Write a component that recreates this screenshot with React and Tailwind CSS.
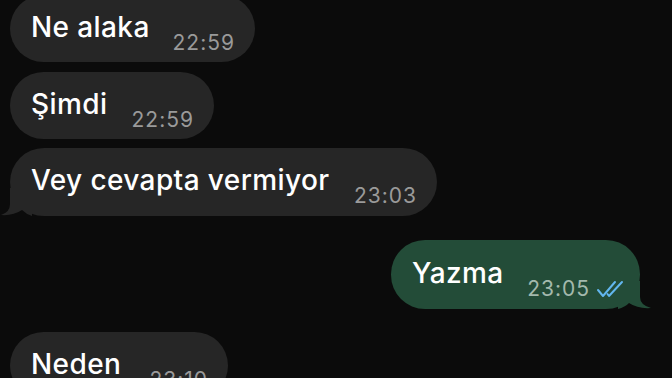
import React from 'react'

const font = { fontFamily: 'Inter, "Noto Sans", "Liberation Sans", sans-serif' }

function LeftTail() {
  return (
    <svg className="absolute left-[-10px] bottom-0" width="32" height="28" viewBox="0 0 32 28">
      <path d="M10 0 L10 16 Q10 24 1 27 Q13 28 22 22 Q26 26 32 28 L32 0 Z" fill="#262626" />
    </svg>
  )
}

function RightTail() {
  return (
    <svg className="absolute right-[-12px] bottom-0" width="34" height="28" viewBox="0 0 34 28">
      <path d="M22 0 L22 16 Q22 24 33 27 Q20 28 11 22 Q7 26 0 28 L0 0 Z" fill="#234c38" />
    </svg>
  )
}

function Ticks() {
  return (
    <svg width="30" height="20" viewBox="0 0 30 20" className="ml-[6px]">
      <path d="M2 11 L7 17 L19 3" fill="none" stroke="#62b6ee" strokeWidth="2" strokeLinecap="round" strokeLinejoin="round" />
      <path d="M11.5 15 L13 17 L26 3" fill="none" stroke="#62b6ee" strokeWidth="2" strokeLinecap="round" strokeLinejoin="round" />
    </svg>
  )
}

function Bubble({ text, time, width, mine, tail, className = '' }) {
  return (
    <div
      className={`relative flex h-[67px] shrink-0 items-start justify-between rounded-[34px] pl-[21px] pt-[18px] ${mine ? 'bg-[#234c38] pr-[14px]' : 'bg-[#262626] pr-[20px]'} ${className}`}
      style={{ width }}
    >
      {tail && (mine ? <RightTail /> : <LeftTail />)}
      <span className="relative whitespace-nowrap text-[28px] font-medium leading-none tracking-[0.4px] text-white">{text}</span>
      <span className="relative mt-[19px] flex items-end">
        <span className={`whitespace-nowrap text-[21px] leading-none tracking-[1px] ${mine ? 'text-[#a3b9ad]' : 'text-[#9a9a9a]'}`}>{time}</span>
        {mine && <Ticks />}
      </span>
    </div>
  )
}

export default function App() {
  return (
    <div className="h-[378px] w-[672px] overflow-hidden bg-[#0b0b0b]" style={font}>
      <div className="flex flex-col items-start pl-[10px] pr-[32px]">
        <Bubble text="Ne alaka" time="22:59" width={245} className="mt-[-5px]" />
        <Bubble text="Şimdi" time="22:59" width={204} className="mt-[10px]" />
        <Bubble text="Vey cevapta vermiyor" time="23:03" width={427} tail className="mt-[9px] h-[68px]" />
        <Bubble text="Yazma" time="23:05" width={249} mine tail className="mt-[24px] h-[69px] self-end !pt-[19px]" />
        <Bubble text="Neden" time="23:10" width={218} className="mt-[23px]" />
      </div>
    </div>
  )
}
